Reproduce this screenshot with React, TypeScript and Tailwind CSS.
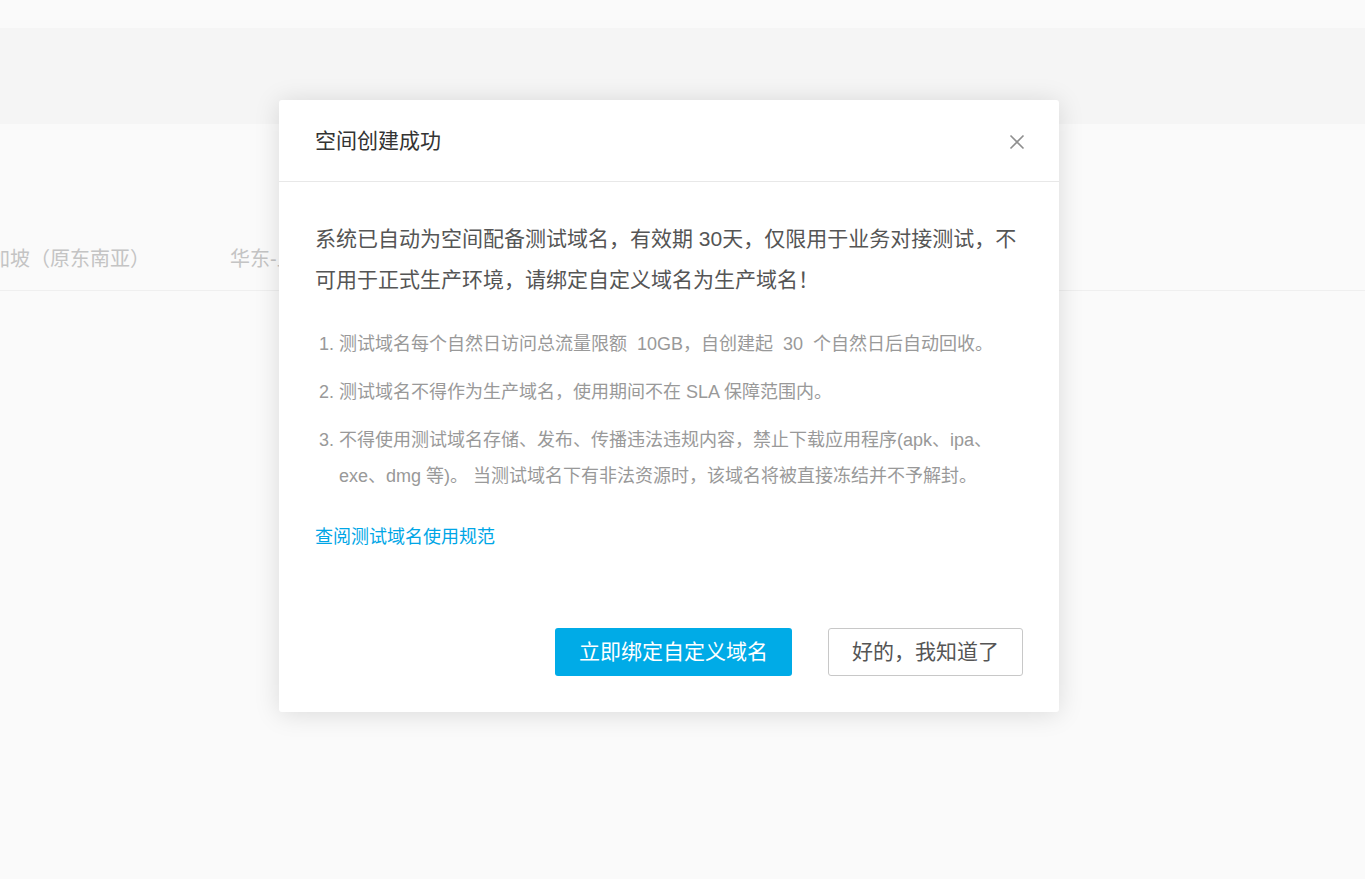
import React from "react";

const font = { fontFamily: '"Liberation Sans", "Noto Sans CJK SC", sans-serif' };

export default function App() {
  return (
    <div className="relative w-[1365px] h-[879px] overflow-hidden bg-[#fafafa]" style={font}>
      {/* background page */}
      <div className="h-[28px] bg-[#fafafa]" />
      <div className="h-[96px] bg-[#f5f5f5]" />
      <div className="h-[167px] border-b border-[#efefef] flex items-end">
        <div className="flex items-center h-[62px] ml-[-30px] gap-[80px] text-[20px] text-[#c4c4c4]">
          <span>新加坡（原东南亚）</span>
          <span>华东-上海</span>
        </div>
      </div>

      {/* modal */}
      <div className="absolute left-[279px] top-[100px] w-[780px] h-[612px] bg-white rounded-[3px] shadow-[0_2px_26px_rgba(0,0,0,0.13)] flex flex-col">
        <div className="h-[82px] shrink-0 border-b border-[#e8e8e8] flex items-center justify-between pl-9 pr-[33px]">
          <span className="text-[21px] text-[#333]">空间创建成功</span>
          <svg width="18" height="18" viewBox="0 0 18 18" className="mt-[2px]">
            <path d="M2.5 2.5 L15.5 15.5 M15.5 2.5 L2.5 15.5" stroke="#8f8f8f" strokeWidth="1.6" fill="none" />
          </svg>
        </div>
        <div className="flex-1 pt-9 px-9">
          <p className="text-[21px] leading-[41px] text-[#555]">
            系统已自动为空间配备测试域名，有效期 30天，仅限用于业务对接测试，不<br />
            可用于正式生产环境，请绑定自定义域名为生产域名！
          </p>
          <ol className="mt-[26px] pl-6 list-decimal text-[18px] leading-[36px] text-[#999] flex flex-col gap-3">
            <li>测试域名每个自然日访问总流量限额&nbsp; 10GB，自创建起&nbsp; 30&nbsp; 个自然日后自动回收。</li>
            <li>测试域名不得作为生产域名，使用期间不在 SLA 保障范围内。</li>
            <li>
              不得使用测试域名存储、发布、传播违法违规内容，禁止下载应用程序(apk、ipa、<br />
              exe、dmg 等)。 当测试域名下有非法资源时，该域名将被直接冻结并不予解封。
            </li>
          </ol>
          <div className="mt-[31px] text-[18px] leading-[24px] text-[#00a6e6]">查阅测试域名使用规范</div>
        </div>
        <div className="flex justify-end gap-9 pr-9 pb-9">
          <button className="w-[237px] h-[48px] rounded-[3px] bg-[#00abe7] text-white text-[21px]">立即绑定自定义域名</button>
          <button className="w-[195px] h-[48px] rounded-[3px] border border-[#c8c8c8] bg-white text-[#555] text-[21px]">好的，我知道了</button>
        </div>
      </div>
    </div>
  );
}
